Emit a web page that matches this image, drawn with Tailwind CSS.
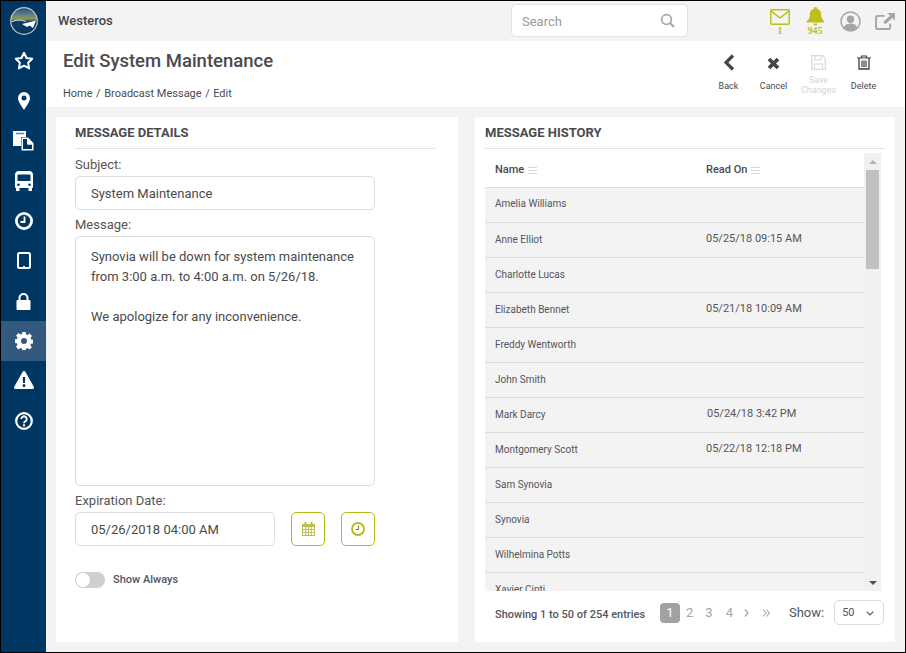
<!DOCTYPE html>
<html lang="en">
  <head>
    <meta charset="UTF-8" />
    <title>Edit System Maintenance</title>
    <script src="https://cdn.jsdelivr.net/npm/@tailwindcss/browser@4"></script>
  </head>
  <body class="bg-[#f3f3f3] font-['Roboto',sans-serif] text-[#4a4a4a] overflow-hidden">
    <div class="w-[906px] h-[653px] border border-black flex overflow-hidden">
      <!-- sidebar -->
      <nav class="w-[45px] shrink-0 bg-[#003662] flex flex-col items-center text-white">
        <div class="h-10 w-full flex items-center justify-center">
          <svg width="28" height="28" viewBox="0 0 28 28">
            <defs>
              <linearGradient id="globe" x1="0" y1="0" x2="0" y2="1">
                <stop offset="0" stop-color="#244f73" />
                <stop offset="0.25" stop-color="#5d7f8f" />
                <stop offset="0.42" stop-color="#8f9c4a" />
                <stop offset="0.52" stop-color="#0e3d63" />
                <stop offset="1" stop-color="#0a3659" />
              </linearGradient>
            </defs>
            <circle cx="14" cy="14" r="13.300" fill="url(#globe)" stroke="#bcc6ce" stroke-width="1.200" />
            <path d="M1.500 15C6 12.500 11 12.500 16 14.500" stroke="#dfe4e8" stroke-width="1" fill="none" />
            <path d="M12 17L26 13.500L23 21L19.500 18.500L17 20Z" fill="#fff" />
          </svg>
        </div>
        <div class="h-10 w-full flex items-center justify-center pb-[2px]">
          <svg width="20" height="19" viewBox="0 0 20 19"><path d="M10 1.800l2.500 5.200 5.700.8-4.100 4 1 5.600L10 14.700l-5.100 2.700 1-5.600-4.100-4 5.700-.8z" fill="none" stroke="#fff" stroke-width="2" stroke-linejoin="round" /></svg>
        </div>
        <div class="h-10 w-full flex items-center justify-center">
          <svg width="12" height="18" viewBox="0 0 12 18"><path fill-rule="evenodd" d="M6 0a6 6 0 0 1 6 6c0 3.500-4 9-6 12C4 15 0 9.500 0 6a6 6 0 0 1 6-6zm0 3.500a2.500 2.500 0 1 0 0 5 2.500 2.500 0 0 0 0-5z" fill="#fff" /></svg>
        </div>
        <div class="h-10 w-full flex items-center justify-center">
          <svg width="21" height="20" viewBox="0 0 21 20"><path d="M0 0h13v6H8v9H0z" fill="#fff" /><path d="M3 2.500h8" stroke="#5f7f9c" stroke-width="1.500" /><path d="M8.500 6.500H15l5.500 5.500v7.500h-12z" fill="#fff" /><path d="M10 8h4v5.500h5V18h-9z" fill="#003662" /><path d="M15 7.500v5.500h5" fill="none" stroke="#fff" /></svg>
        </div>
        <div class="h-10 w-full flex items-center justify-center">
          <svg width="18" height="20" viewBox="0 0 18 20"><path fill-rule="evenodd" d="M4 0h10a4 4 0 0 1 4 4v12a1 1 0 0 1-1 1v3h-3.500v-3h-9v3H1v-3a1 1 0 0 1-1-1V4a4 4 0 0 1 4-4zM3.500 3.500a1 1 0 0 0-1 1V10h13V4.500a1 1 0 0 0-1-1zM3.500 12.500a1.300 1.300 0 1 0 0 2.600 1.300 1.300 0 0 0 0-2.600zm11 0a1.300 1.300 0 1 0 0 2.600 1.300 1.300 0 0 0 0-2.600z" fill="#fff" /></svg>
        </div>
        <div class="h-10 w-full flex items-center justify-center">
          <svg width="18" height="18" viewBox="0 0 18 18"><circle cx="9" cy="9" r="7.600" fill="none" stroke="#fff" stroke-width="2.800" /><path d="M9.500 4.500v5.500H5.500" fill="none" stroke="#fff" stroke-width="1.800" /></svg>
        </div>
        <div class="h-10 w-full flex items-center justify-center pb-[1px]">
          <svg width="14" height="17" viewBox="0 0 14 17"><rect x="1" y="1" width="12" height="15" rx="1.500" fill="none" stroke="#fff" stroke-width="2" /><path d="M6 14.500h2" stroke="#fff" /></svg>
        </div>
        <div class="h-10 w-full flex items-center justify-center">
          <svg width="15" height="17" viewBox="0 0 15 17"><path d="M3.500 8V5a4 4 0 0 1 8 0v3" fill="none" stroke="#fff" stroke-width="2" /><rect x="0.500" y="7" width="14" height="10" rx="1" fill="#fff" /></svg>
        </div>
        <div class="h-10 w-full flex items-center justify-center bg-[#33597f]">
          <svg width="18" height="18" viewBox="0 0 18 18"><path fill-rule="evenodd" d="M7.300 0h3.400l.4 2.500 1.500.6 2-1.500 2.400 2.400-1.500 2 .6 1.500 2.400.4v3.400l-2.500.4-.6 1.500 1.500 2-2.400 2.400-2-1.500-1.500.6-.4 2.400H7.300l-.4-2.500-1.500-.6-2 1.500L1 14.700l1.500-2-.6-1.500L-.500 10.800V7.400L2 7l.6-1.500-1.500-2L3.500 1l2 1.500L7 2zM9 6a3 3 0 1 0 0 6 3 3 0 0 0 0-6z" fill="#fff" /></svg>
        </div>
        <div class="h-10 w-full flex items-center justify-center pb-[2px]">
          <svg width="20" height="18" viewBox="0 0 20 18"><path fill-rule="evenodd" d="M10 0c.6 0 1 .3 1.300.8l8.500 15c.5 1-.2 2.200-1.300 2.200h-17C.4 18-.3 16.800.2 15.800L8.700.8C9 .3 9.400 0 10 0zM8.700 6l.4 6h1.800l.4-6zM10 13a1.500 1.500 0 1 0 0 3 1.500 1.500 0 0 0 0-3z" fill="#fff" /></svg>
        </div>
        <div class="h-10 w-full flex items-center justify-center">
          <svg width="18" height="18" viewBox="0 0 18 18"><circle cx="9" cy="9" r="7.800" fill="none" stroke="#fff" stroke-width="2.200" /><path d="M6.300 7a2.700 2.700 0 1 1 4.200 2.300c-1 .6-1.500 1-1.500 2" fill="none" stroke="#fff" stroke-width="1.900" /><rect x="8" y="12.300" width="2" height="2" fill="#fff" /></svg>
        </div>
      </nav>

      <div class="flex-1 flex flex-col min-w-0">
        <!-- top bar -->
        <header class="h-10 shrink-0 flex items-center pl-3 bg-[#f3f3f3]">
          <span class="w-[55px] shrink-0 whitespace-nowrap text-[13px] font-medium text-[#44444c]">Westeros</span>
          <div class="ml-[398px] shrink-0 w-[177px] h-[33px] mt-[-1px] bg-white border border-[#e2e2e2] rounded-[5px] flex items-center justify-between pl-[10px] pr-[12px]">
            <span class="text-[13px] text-[#9a9a9a] mt-[2px]">Search</span>
            <svg width="15" height="15" viewBox="0 0 15 15"><circle cx="6.500" cy="6.500" r="4.900" fill="none" stroke="#a8a8a8" stroke-width="1.700" /><path d="M10 10l4 4" stroke="#a8a8a8" stroke-width="2.200" /></svg>
          </div>
          <div class="ml-[82px] shrink-0 w-5 flex flex-col items-center mt-[2px]">
            <svg width="20" height="16" viewBox="0 0 20 16"><rect x="0.750" y="0.750" width="18.500" height="14.500" rx="1" fill="none" stroke="#bdbf1c" stroke-width="1.500" /><path d="M1 2l9 7 9-7" fill="none" stroke="#bdbf1c" stroke-width="1.500" /></svg>
            <span class="font-['Liberation_Serif',serif] font-bold text-[10px] leading-[10px] mt-[1px] text-[#bdbf1c]">1</span>
          </div>
          <div class="ml-[15px] shrink-0 w-5 flex flex-col items-center mt-[-1px]">
            <svg width="19" height="19" viewBox="0 0 19 19"><path d="M9.500 0a1.500 1.500 0 0 1 1.500 1.700c3 .7 4.200 3.200 4.200 6 0 3.500 1.300 5 3 6.300v1.500H.8V14c1.700-1.300 3-2.800 3-6.300 0-2.800 1.200-5.300 4.200-6A1.500 1.500 0 0 1 9.500 0zM7.500 16.500h4a2 2 0 0 1-4 0z" fill="#bdbf1c" /></svg>
            <span class="font-['Liberation_Serif',serif] font-bold text-[10px] leading-[9px] text-[#bdbf1c]">945</span>
          </div>
          <svg class="ml-[15px] shrink-0" width="21" height="21" viewBox="0 0 21 21"><circle cx="10.500" cy="10.500" r="9.500" fill="none" stroke="#a5a5a5" stroke-width="1.500" /><circle cx="10.500" cy="8.200" r="3.700" fill="#a5a5a5" /><path d="M3.800 16.500c1-3 3.500-4 6.700-4s5.700 1 6.700 4a9 9 0 0 1-13.400 0z" fill="#a5a5a5" /></svg>
          <svg class="ml-[14px] shrink-0" width="20" height="17" viewBox="0 0 21 18"><path d="M10 3H3a2 2 0 0 0-2 2v10a2 2 0 0 0 2 2h11a2 2 0 0 0 2-2v-4" fill="none" stroke="#a5a5a5" stroke-width="2" /><path d="M13 0h8v8l-2.800-2.800L11 12 8.500 9.500l7.300-6.700z" fill="#a5a5a5" /></svg>
        </header>

        <!-- page title + actions -->
        <section class="h-[66px] shrink-0 bg-white flex justify-between pl-[17px] pr-[19px]">
          <div>
            <h1 class="text-[18.5px] leading-6 mt-[8px] font-medium text-[#4a4a4f]">Edit System Maintenance</h1>
            <div class="mt-[14px] text-[11px] leading-[14px] text-[#4a4a4f] flex gap-[3.5px]">
              <span>Home</span><span>/</span><span>Broadcast Message</span><span>/</span><span>Edit</span>
            </div>
          </div>
          <div class="flex text-[9px] leading-[10px] text-center">
            <div class="w-[45px] pt-[13px] flex flex-col items-center">
              <svg width="12" height="17" viewBox="0 0 12 17"><path d="M10 1.500L3 8.500l7 7" fill="none" stroke="#45454d" stroke-width="3.200" /></svg>
              <span class="mt-[10px]">Back</span>
            </div>
            <div class="w-[45px] pt-[16px] flex flex-col items-center">
              <svg width="13" height="13" viewBox="0 0 13 13"><path d="M2 2l9 9M11 2l-9 9" stroke="#45454d" stroke-width="3.800" /></svg>
              <span class="mt-[11px]">Cancel</span>
            </div>
            <div class="w-[45px] pt-[14px] flex flex-col items-center text-[#d4d4d4]">
              <svg width="15" height="15" viewBox="0 0 15 15"><path d="M.7.700h10.800l2.800 2.800v10.800H.7z" fill="none" stroke="#dcdcdc" stroke-width="1.300" /><path d="M4 1v4h6V1M3.500 14V9h8v5" fill="none" stroke="#dcdcdc" stroke-width="1.200" /></svg>
              <span class="mt-[5px]">Save Changes</span>
            </div>
            <div class="w-[45px] pt-[14px] flex flex-col items-center">
              <svg width="14" height="15" viewBox="0 0 14 15"><path d="M0 3h14M4.500 3V1h5v2" fill="none" stroke="#3c3c4c" stroke-width="1.200" /><path d="M2 3v11h10V3" fill="none" stroke="#3c3c4c" stroke-width="1.300" /><path d="M5 5.500v6.500M7 5.500v6.500M9 5.500v6.500" stroke="#3c3c4c" stroke-width="1.200" /></svg>
              <span class="mt-[11px]">Delete</span>
            </div>
          </div>
        </section>

        <!-- cards -->
        <main class="flex-1 min-h-0 flex p-[10px] gap-[17px]">
          <div class="w-[402px] bg-white px-[19px]">
            <h2 class="text-[13px] leading-[14px] mt-[9px] pb-[8px] font-bold text-[#4a4a4f] border-b border-[#e3e3e3] w-[360px]">MESSAGE DETAILS</h2>
            <label class="block text-[13px] leading-[16px] mt-[8px] text-[#555]">Subject:</label>
            <div class="mt-[3px] w-[300px] h-[34px] border border-[#dcdcdc] rounded-[5px] flex items-center px-[15px] pt-[2px] text-[13px]">System Maintenance</div>
            <label class="block text-[13px] leading-[16px] mt-[7px] text-[#555]">Message:</label>
            <div class="mt-[3px] w-[300px] h-[250px] border border-[#dcdcdc] rounded-[5px] px-[15px] py-[10px] text-[13px] leading-[20px]">
              <p>Synovia will be down for system maintenance<br />from 3:00 a.m. to 4:00 a.m. on 5/26/18.</p>
              <p class="mt-[20px]">We apologize for any inconvenience.</p>
            </div>
            <label class="block text-[13px] leading-[16px] mt-[7px] text-[#555]">Expiration Date:</label>
            <div class="mt-[3px] flex">
              <div class="w-[200px] h-[34px] border border-[#dcdcdc] rounded-[5px] flex items-center px-[15px] pt-[2px] text-[13px]">05/26/2018 04:00 AM</div>
              <div class="ml-[16px] w-[34px] h-[34px] border border-[#b7ba14] rounded-[5px] flex items-center justify-center">
                <svg width="13" height="14" viewBox="0 0 13 14"><path d="M0 2h13v12H0z" fill="#bcbe50" /><path d="M1 5h11v8H1z" fill="#fff" /><path d="M1 7.500h11M1 10.300h11M3.700 5v8M6.500 5v8M9.300 5v8" stroke="#bcbe50" /><path d="M3.500 0v3M9.500 0v3" stroke="#bcbe50" stroke-width="2" /></svg>
              </div>
              <div class="ml-[16px] w-[34px] h-[34px] border border-[#b7ba14] rounded-[5px] flex items-center justify-center">
                <svg width="14" height="14" viewBox="0 0 14 14"><circle cx="7" cy="7" r="6" fill="none" stroke="#b7ba14" stroke-width="1.800" /><path d="M7.500 3.500V7.500H4.500" fill="none" stroke="#777a20" stroke-width="1" /></svg>
              </div>
            </div>
            <div class="mt-[26px] flex items-center">
              <div class="w-[30px] h-4 rounded-full bg-[#cfcfcf] p-[1px]"><div class="w-[14px] h-[14px] rounded-full bg-white"></div></div>
              <span class="ml-2 text-[11px] font-medium text-[#55555c]">Show Always</span>
            </div>
          </div>

          <div class="w-[420px] bg-white px-[10px] flex flex-col">
            <h2 class="text-[13px] leading-[14px] mt-[9px] pb-[8px] font-bold text-[#4a4a4f] border-b border-[#e3e3e3]">MESSAGE HISTORY</h2>
            <div class="mt-[4px] h-[438px] w-[396px] shrink-0 flex overflow-hidden">
              <div class="w-[379px]">
                <div class="h-[35px] flex items-center border-b border-[#dcdcdc] text-[11px] font-medium text-[#4a4a4f]">
                  <div class="w-[221px] pl-[10px] flex items-center gap-[4px]">Name
                    <svg width="9" height="7" viewBox="0 0 9 7"><path d="M0 .5h9M0 3.500h9M0 6.500h9" stroke="#d8d8d8" /></svg>
                  </div>
                  <div class="flex items-center gap-[4px]">Read On
                    <svg width="9" height="7" viewBox="0 0 9 7"><path d="M0 .5h9M0 3.500h9M0 6.500h9" stroke="#d8d8d8" /></svg>
                  </div>
                </div>
                <div class="bg-[#f3f3f3] text-[#55555c]">
                  <div class="h-[35px] flex items-center border-b border-[#dcdcdc] pb-[3px]"><div class="w-[221px] pl-[10px] text-[10px]">Amelia Williams</div></div>
                  <div class="h-[35px] flex items-center border-b border-[#dcdcdc] pb-[1px]"><div class="w-[221px] pl-[10px] text-[10px]">Anne Elliot</div><div class="text-[11px]">05/25/18 09:15 AM</div></div>
                  <div class="h-[35px] flex items-center border-b border-[#dcdcdc] pb-[1px]"><div class="w-[221px] pl-[10px] text-[10px]">Charlotte Lucas</div></div>
                  <div class="h-[35px] flex items-center border-b border-[#dcdcdc] pb-[1px]"><div class="w-[221px] pl-[10px] text-[10px]">Elizabeth Bennet</div><div class="text-[11px]">05/21/18 10:09 AM</div></div>
                  <div class="h-[35px] flex items-center border-b border-[#dcdcdc] pb-[1px]"><div class="w-[221px] pl-[10px] text-[10px]">Freddy Wentworth</div></div>
                  <div class="h-[35px] flex items-center border-b border-[#dcdcdc] pb-[1px]"><div class="w-[221px] pl-[10px] text-[10px]">John Smith</div></div>
                  <div class="h-[35px] flex items-center border-b border-[#dcdcdc] pb-[1px]"><div class="w-[222px] pl-[10px] text-[10px]">Mark Darcy</div><div class="text-[11px]">05/24/18 3:42 PM</div></div>
                  <div class="h-[35px] flex items-center border-b border-[#dcdcdc] pb-[1px]"><div class="w-[221px] pl-[10px] text-[10px]">Montgomery Scott</div><div class="text-[11px]">05/22/18 12:18 PM</div></div>
                  <div class="h-[35px] flex items-center border-b border-[#dcdcdc] pb-[1px]"><div class="w-[221px] pl-[10px] text-[10px]">Sam Synovia</div></div>
                  <div class="h-[35px] flex items-center border-b border-[#dcdcdc] pb-[1px]"><div class="w-[221px] pl-[10px] text-[10px]">Synovia</div></div>
                  <div class="h-[35px] flex items-center border-b border-[#dcdcdc] pb-[1px]"><div class="w-[221px] pl-[10px] text-[10px]">Wilhelmina Potts</div></div>
                  <div class="h-[35px] flex items-center border-b border-[#dcdcdc] pb-[1px]"><div class="w-[221px] pl-[10px] text-[10px]">Xavier Cinti</div></div>
                </div>
              </div>
              <!-- scrollbar -->
              <div class="w-[17px] bg-[#f1f1f1] flex flex-col items-center">
                <div class="h-[17px] flex items-center"><div class="w-0 h-0 border-x-[4px] border-x-transparent border-b-[4px] border-b-[#b5b5b5]"></div></div>
                <div class="w-[13px] h-[99px] bg-[#c1c1c1]"></div>
                <div class="mt-auto h-[17px] flex items-center"><div class="w-0 h-0 border-x-[4px] border-x-transparent border-t-[4px] border-t-[#505050]"></div></div>
              </div>
            </div>
            <div class="mt-[9px] flex items-center h-[25px] pl-[10px] text-[#55555c]">
              <span class="text-[11px] font-medium w-[165px] mt-[5px]">Showing 1 to 50 of 254 entries</span>
              <span class="w-5 h-5 rounded-[4px] bg-[#a2a2a2] text-white text-[13px] flex items-center justify-center">1</span>
              <span class="ml-[6px] text-[13px] text-[#a5a5a5]">2</span>
              <span class="ml-[12px] text-[13px] text-[#a5a5a5]">3</span>
              <span class="ml-[13px] text-[13px] text-[#a5a5a5]">4</span>
              <svg class="ml-[11px]" width="5" height="8" viewBox="0 0 5 8"><path d="M1 .5l3 3.500-3 3.500" fill="none" stroke="#a5a5a5" stroke-width="1.200" /></svg>
              <svg class="ml-[13px]" width="8" height="8" viewBox="0 0 8 8"><path d="M1 .5l3 3.500-3 3.500M4.500 .5l3 3.500-3 3.500" fill="none" stroke="#a5a5a5" stroke-width="1.100" /></svg>
              <span class="ml-[19px] text-[13px]">Show:</span>
              <div class="ml-[10px] w-[50px] h-[25px] border border-[#dcdcdc] rounded-[5px] flex items-center justify-between pl-[7px] pr-[9px] pt-[2px] text-[11px]">50
                <svg width="8" height="5" viewBox="0 0 8 5"><path d="M.7.700L4 4l3.300-3.300" fill="none" stroke="#55555c" stroke-width="1.200" /></svg>
              </div>
            </div>
          </div>
        </main>
      </div>
    </div>
  </body>
</html>
